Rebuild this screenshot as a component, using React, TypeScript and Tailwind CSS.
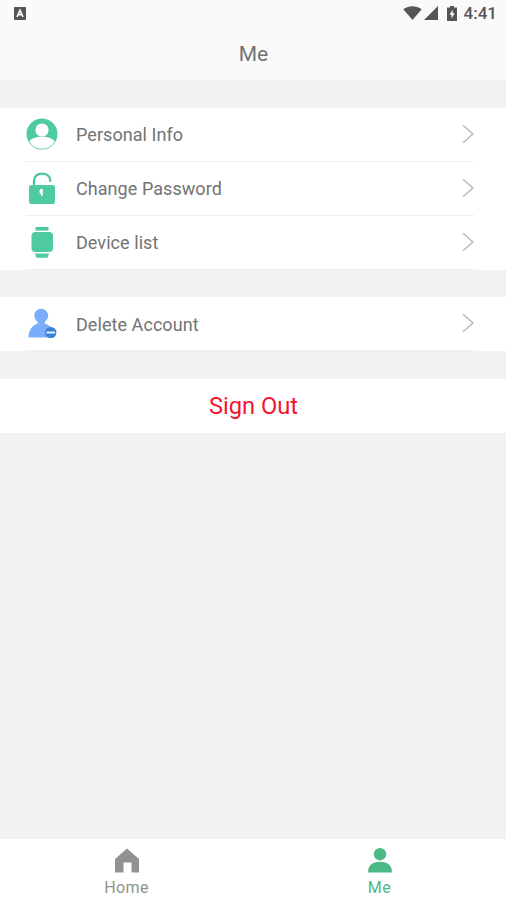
import { useState } from "react";
import type { ReactNode } from "react";

type Row = {
  label: string;
  icon: ReactNode;
};

function PersonIcon() {
  return (
    <svg width="32" height="32" viewBox="0 0 32 32">
      <circle cx="16" cy="16" r="15.5" fill="#4fc9a0" />
      <circle cx="16" cy="12" r="6.6" fill="#fff" />
      <path d="M3.2 23.6C5 20.4 10 18.8 16 18.8s11 1.6 12.8 4.8A14.9 14.9 0 0 1 16 30.8 14.9 14.9 0 0 1 3.2 23.6z" fill="#fff" />
    </svg>
  );
}

function LockIcon() {
  return (
    <svg width="32" height="32" viewBox="0 0 32 32">
      <path d="M7.9 14V9c0-4.4 3.3-7.4 8.1-7.4 4.6 0 8 2.7 8.2 6.6v1.6" fill="none" stroke="#45c79b" strokeWidth="2.2" />
      <rect x="3" y="13" width="26" height="19" rx="2.5" fill="#4fc9a0" />
      <path d="M16.7 16.8v7h-1.5l-.4-1.8a2.800 2.800 0 0 1 1.900-5.200z" fill="#fff" />
    </svg>
  );
}

function WatchIcon() {
  return (
    <svg width="32" height="32" viewBox="0 0 32 32">
      <rect x="9.5" y="1" width="13" height="3.6" fill="#4fc9a0" />
      <rect x="5.5" y="6" width="21.5" height="20" rx="4" fill="#4fc9a0" />
      <path d="M9.2 27.6h13.6v1.8h-1v2.4H10.2v-2.4h-1z" fill="#4fc9a0" />
    </svg>
  );
}

function DeleteIcon() {
  return (
    <svg width="32" height="32" viewBox="0 0 32 32">
      <circle cx="15.2" cy="8.7" r="7" fill="#7badf8" />
      <path d="M2.5 30.500C2.5 22 7 18 11.5 16.700L12 13h6.500l.5 3.500c5 1.500 8.500 5.500 9 14z" fill="#7badf8" />
      <circle cx="24.8" cy="25.5" r="5.6" fill="#3a7fd8" />
      <path d="M20.500 25.500h8.500" stroke="#e9f3ff" strokeWidth="2" />
    </svg>
  );
}

const ACCOUNT: Row[] = [
  { label: "Personal Info", icon: <PersonIcon /> },
  { label: "Change Password", icon: <LockIcon /> },
  { label: "Device list", icon: <WatchIcon /> },
];

const DANGER: Row[] = [{ label: "Delete Account", icon: <DeleteIcon /> }];

function MenuGroup({ rows, rowClass = "" }: { rows: Row[]; rowClass?: string }) {
  return (
    <div className="bg-white">
      {rows.map((row) => (
        <button key={row.label} className={`block h-[54px] w-full pl-[26px] pr-8 text-left ${rowClass}`}>
          <span className="flex h-full items-center border-b border-[#efefef]">
            <span className="pb-[2px]">{row.icon}</span>
            <span className="ml-[18px] flex-1 text-[18px] tracking-[0.06px] text-[#737373]">{row.label}</span>
            <svg className="mb-[2px]" width="12" height="20" viewBox="0 0 12 20" fill="none" stroke="#b4b4b4" strokeWidth="1.3">
              <path d="M1 1.3 11 10 1 18.7" />
            </svg>
          </span>
        </button>
      ))}
    </div>
  );
}

function StatusBar() {
  return (
    <div className="flex h-[27px] items-center justify-between pl-[14px] pr-[9px] text-[#555]">
      <svg width="12" height="13" viewBox="0 0 12 13">
        <rect width="12" height="13" rx="1" fill="#555" />
        <path d="M3 10 6 3.3 9 10M4.2 7.8h3.6" fill="none" stroke="#fff" strokeWidth="1.6" />
      </svg>
      <div className="flex items-center">
        <svg className="mb-px" width="19" height="14" viewBox="0 0 19 14">
          <path d="M.3 3.3C5.5-.9 13.5-.9 18.7 3.3L9.5 14z" fill="#555" />
        </svg>
        <svg className="ml-[2px] mb-px" width="14" height="14" viewBox="0 0 14 14">
          <path d="M14 0v14H0z" fill="#555" />
        </svg>
        <svg className="ml-[9px] mb-px" width="10" height="15" viewBox="0 0 10 15">
          <path d="M3 0h4v1.5h3V15H0V1.5h3z" fill="#555" />
          <path d="M5.7 3.5 2.5 8.7h2v3.8l3.2-5.2h-2z" fill="#fff" />
        </svg>
        <span className="ml-[7px] text-[17px] leading-none font-medium">4:41</span>
      </div>
    </div>
  );
}

export default function App() {
  const [tab, setTab] = useState<"home" | "me">("me");

  return (
    <div className="flex h-screen flex-col overflow-hidden bg-[#f2f2f2] font-['Roboto',sans-serif]">
      <header className="h-20 bg-[#fafafa]">
        <StatusBar />
        <h1 className="pl-px text-center text-[21px] leading-[54px] text-[#737373]">Me</h1>
      </header>

      <main className="flex-1">
        <div className="mt-7">
          <MenuGroup rows={ACCOUNT} />
        </div>
        <div className="mt-[27px]">
          <MenuGroup rows={DANGER} rowClass="pt-px" />
        </div>
        <button className="mt-7 block h-[54px] w-full bg-white pt-[2px] pl-px text-center text-[23.7px] text-[#f3152f]">
          Sign Out
        </button>
      </main>

      <nav className="grid h-[61px] grid-cols-2 bg-white">
        <button
          onClick={() => setTab("home")}
          className={`flex flex-col items-center pt-[9px] ${tab === "home" ? "text-[#4cba85]" : "text-[#929292]"}`}
        >
          <svg width="24" height="25" viewBox="0 0 24 25" fill="currentColor">
            <path d="M12 .5 24 11V24.5h-7.5V14.5h-8v10H0V11z" />
          </svg>
          <span className="mt-[5px] text-[16px] leading-5 tracking-[0.4px]">Home</span>
        </button>
        <button
          onClick={() => setTab("me")}
          className={`flex flex-col items-center pt-[9px] ${tab === "me" ? "text-[#4cba85]" : "text-[#929292]"}`}
        >
          <svg width="24" height="25" viewBox="0 0 24 25" fill="currentColor">
            <circle cx="12" cy="6.2" r="6.2" />
            <path d="M0 24.5c0-7 4-10.8 12-10.8s12 3.8 12 10.8z" />
          </svg>
          <span className="mt-[5px] text-[16px] leading-5 tracking-[0.4px]">Me</span>
        </button>
      </nav>
    </div>
  );
}
